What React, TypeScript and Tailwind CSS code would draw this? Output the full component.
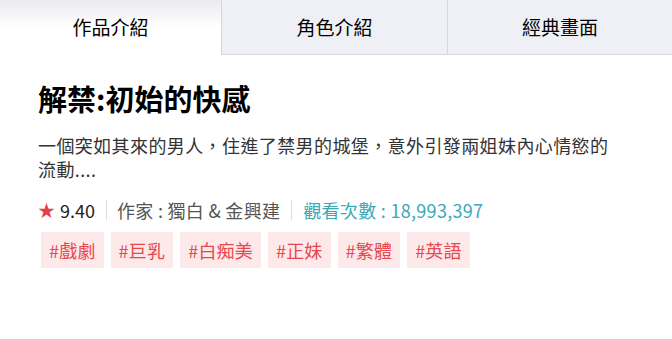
import React from "react";

const tags = ["#戲劇", "#巨乳", "#白痴美", "#正妹", "#繁體", "#英語"];

export default function App() {
  return (
    <div
      className="w-[672px] h-[339px] bg-white overflow-hidden"
      style={{ fontFamily: '"Noto Sans CJK TC", "Noto Sans", sans-serif' }}
    >
      <div className="flex h-[55px]">
        <div className="w-[221px] h-full flex items-center justify-center text-[19px] text-black bg-gradient-to-b from-[#ebebee] via-white to-white">
          作品介紹
        </div>
        <div className="w-[226px] h-full flex items-center justify-center text-[19px] text-black bg-[#eff0f5] border-l border-b border-[#d6d7dc]">
          角色介紹
        </div>
        <div className="flex-1 h-full flex items-center justify-center text-[19px] text-black bg-[#eff0f5] border-l border-b border-[#d6d7dc]">
          經典畫面
        </div>
      </div>

      <div className="px-[38px]">
        <h1 className="mt-[25px] text-[29px] leading-[36px] font-bold text-black">
          解禁:初始的快感
        </h1>
        <p className="mt-[17px] w-[585px] text-[18px] leading-[24px] tracking-[0.4px] text-[#333333]">
          一個突如其來的男人，住進了禁男的城堡，意外引發兩姐妹內心情慾的流動....
        </p>
        <div className="mt-[17px] flex items-center h-[24px] text-[18px]">
          <span className="text-[#e8404a] text-[17px] mr-[5px]">★</span>
          <span className="text-[#222222]">9.40</span>
          <span className="ml-[11px] mr-[10px] w-px h-[20px] bg-[#dddddd]" />
          <span className="text-[#555555] tracking-[0.3px]">作家 : 獨白 &amp; 金興建</span>
          <span className="mx-[11px] w-px h-[20px] bg-[#dddddd]" />
          <span className="text-[#3aa8b5] tracking-[0.3px]">觀看次數 : 18,993,397</span>
        </div>
        <div className="mt-[10px] flex gap-[7px] pl-[3px]">
          {tags.map((t) => (
            <span
              key={t}
              className="h-[36px] px-[8px] flex items-center bg-[#fde9ea] text-[#e8474e] text-[18px] tracking-[0.2px]"
            >
              {t}
            </span>
          ))}
        </div>
      </div>
    </div>
  );
}
